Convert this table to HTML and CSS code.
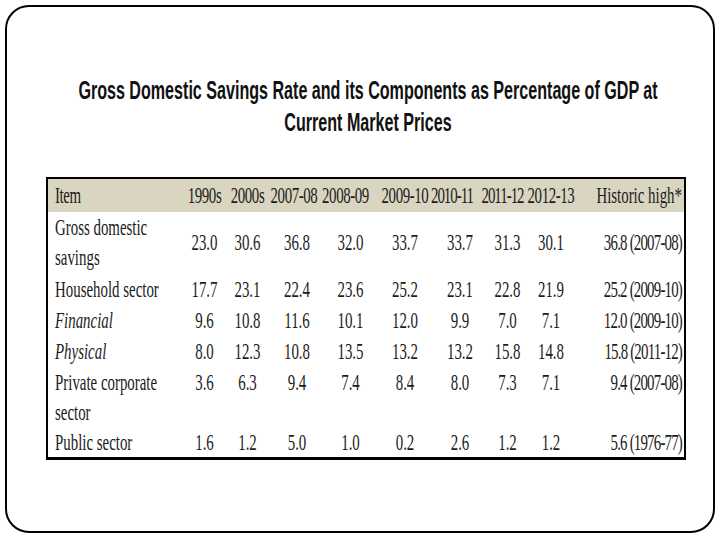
FILE: index.html
```html
<!DOCTYPE html>
<html lang="en">
<head>
<meta charset="utf-8">
<title>Gross Domestic Savings Rate</title>
<link rel="stylesheet" href="styles.css">
</head>
<body>
<div class="slide">
  <h1 class="title"><span>Gross Domestic Savings Rate and its Components as Percentage of GDP at<br>Current Market Prices</span></h1>
  <div class="tbl">
    <div class="row head">
      <div class="c lab"><span>Item</span></div>
      <div class="c"><span>1990s</span></div>
      <div class="c"><span>2000s</span></div>
      <div class="c sh6"><span>2007-08</span></div>
      <div class="c sh10"><span>2008-09</span></div>
      <div class="c"><span>2009-10</span></div>
      <div class="c tight sh16"><span>2010-11</span></div>
      <div class="c tight sh10"><span>2011-12</span></div>
      <div class="c"><span>2012-13</span></div>
      <div class="c hist"><span>Historic high*</span></div>
    </div>
    <div class="row r2">
      <div class="c lab"><span>Gross domestic<br>savings</span></div>
      <div class="c"><span>23.0</span></div>
      <div class="c"><span>30.6</span></div>
      <div class="c"><span>36.8</span></div>
      <div class="c"><span>32.0</span></div>
      <div class="c"><span>33.7</span></div>
      <div class="c"><span>33.7</span></div>
      <div class="c"><span>31.3</span></div>
      <div class="c"><span>30.1</span></div>
      <div class="c hist"><span>36.8 (2007-08)</span></div>
    </div>
    <div class="row">
      <div class="c lab"><span>Household sector</span></div>
      <div class="c"><span>17.7</span></div>
      <div class="c"><span>23.1</span></div>
      <div class="c"><span>22.4</span></div>
      <div class="c"><span>23.6</span></div>
      <div class="c"><span>25.2</span></div>
      <div class="c"><span>23.1</span></div>
      <div class="c"><span>22.8</span></div>
      <div class="c"><span>21.9</span></div>
      <div class="c hist"><span>25.2 (2009-10)</span></div>
    </div>
    <div class="row">
      <div class="c lab it"><span>Financial</span></div>
      <div class="c"><span>9.6</span></div>
      <div class="c"><span>10.8</span></div>
      <div class="c"><span>11.6</span></div>
      <div class="c"><span>10.1</span></div>
      <div class="c"><span>12.0</span></div>
      <div class="c"><span>9.9</span></div>
      <div class="c"><span>7.0</span></div>
      <div class="c"><span>7.1</span></div>
      <div class="c hist"><span>12.0 (2009-10)</span></div>
    </div>
    <div class="row">
      <div class="c lab it"><span>Physical</span></div>
      <div class="c"><span>8.0</span></div>
      <div class="c"><span>12.3</span></div>
      <div class="c"><span>10.8</span></div>
      <div class="c"><span>13.5</span></div>
      <div class="c"><span>13.2</span></div>
      <div class="c"><span>13.2</span></div>
      <div class="c"><span>15.8</span></div>
      <div class="c"><span>14.8</span></div>
      <div class="c hist"><span>15.8 (2011-12)</span></div>
    </div>
    <div class="row r2 top">
      <div class="c lab"><span>Private corporate<br>sector</span></div>
      <div class="c"><span>3.6</span></div>
      <div class="c"><span>6.3</span></div>
      <div class="c"><span>9.4</span></div>
      <div class="c"><span>7.4</span></div>
      <div class="c"><span>8.4</span></div>
      <div class="c"><span>8.0</span></div>
      <div class="c"><span>7.3</span></div>
      <div class="c"><span>7.1</span></div>
      <div class="c hist"><span>9.4 (2007-08)</span></div>
    </div>
    <div class="row last">
      <div class="c lab"><span>Public sector</span></div>
      <div class="c"><span>1.6</span></div>
      <div class="c"><span>1.2</span></div>
      <div class="c"><span>5.0</span></div>
      <div class="c"><span>1.0</span></div>
      <div class="c"><span>0.2</span></div>
      <div class="c"><span>2.6</span></div>
      <div class="c"><span>1.2</span></div>
      <div class="c"><span>1.2</span></div>
      <div class="c hist"><span>5.6 (1976-77)</span></div>
    </div>
  </div>
</div>
</body>
</html>
```

FILE: styles.css
```css
html, body {
  margin: 0;
  padding: 0;
  background: #ffffff;
  overflow: hidden;
}

.slide {
  box-sizing: border-box;
  margin: 5px;
  width: 710px;
  height: 528px;
  border: 2px solid #000000;
  border-radius: 24px;
  padding-top: 68px;
}

.title {
  margin: 0;
  height: 64px;
  padding-left: 16px;
  text-align: center;
  font-family: "Liberation Sans", Arial, sans-serif;
  font-weight: bold;
  font-size: 16.1px;
  line-height: 19.84px;
  color: #111111;
}

.title span {
  display: inline-block;
  white-space: nowrap;
  transform: scaleY(1.613);
  transform-origin: center top;
}

.tbl {
  box-sizing: border-box;
  width: 640px;
  margin: 38px 0 0 39px;
  border: 2px solid #000000;
  border-bottom-width: 3px;
  font-family: "Liberation Serif", "Times New Roman", serif;
  font-size: 14.9px;
  color: #1c1c1c;
}

.row {
  display: grid;
  grid-template-columns: 136px 41px 45px 54px 53px 56px 54px 41px 46px 110px;
  height: 31px;
}

.row.r2 {
  height: 62px;
}

.row.last {
  height: 28px;
}

.row.head {
  background: #dad5c0;
  height: 33px;
}

.c {
  display: flex;
  align-items: center;
  justify-content: center;
  min-width: 0;
}

.c span {
  display: inline-block;
  white-space: nowrap;
  line-height: 19.22px;
  transform: scaleY(1.613);
  transform-origin: center center;
}

.top .c {
  align-items: flex-start;
}

.top .c span {
  transform-origin: center top;
}

.head .c span {
  letter-spacing: -0.4px;
}

.head .tight span {
  letter-spacing: -1px;
}

.head .sh6 {
  padding-right: 6px;
}

.head .sh10 {
  padding-right: 10px;
}

.head .sh16 {
  padding-right: 16px;
}

.lab {
  justify-content: flex-start;
  padding-left: 7px;
}

.it {
  font-style: italic;
}

.hist {
  justify-content: flex-end;
  padding-right: 2px;
}

.row .hist span {
  letter-spacing: -0.8px;
}

.head .hist span {
  letter-spacing: 0;
}
```
